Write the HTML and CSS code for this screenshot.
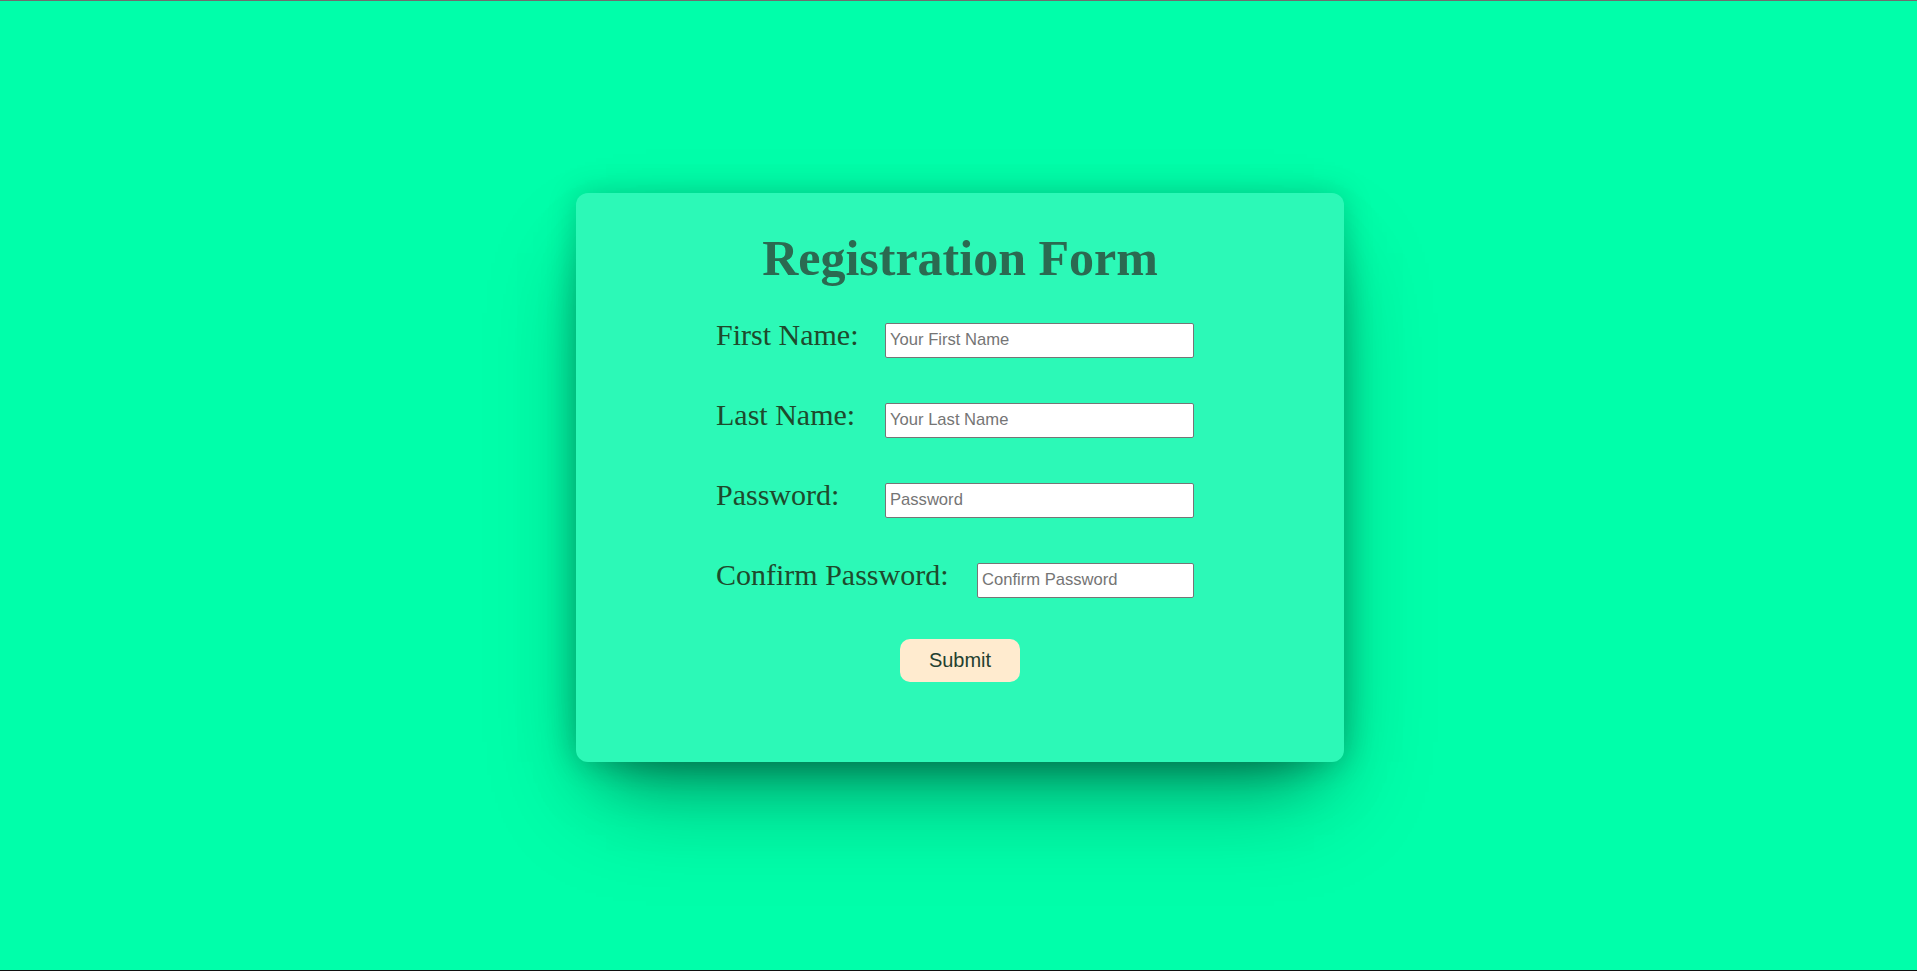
FILE: index.html
```html
<!DOCTYPE html>
<html lang="en">
<head>
<meta charset="utf-8">
<title>Registration Form</title>
<link rel="stylesheet" href="styles.css">
</head>
<body>
<main class="page">
  <form class="card">
    <h1 class="title">Registration Form</h1>
    <div class="fields">
      <div class="row">
        <label class="label" for="first">First Name:</label>
        <input class="input" id="first" type="text" placeholder="Your First Name">
      </div>
      <div class="row">
        <label class="label" for="last">Last Name:</label>
        <input class="input" id="last" type="text" placeholder="Your Last Name">
      </div>
      <div class="row">
        <label class="label" for="pass">Password:</label>
        <input class="input" id="pass" type="password" placeholder="Password">
      </div>
      <div class="row">
        <label class="label" for="confirm">Confirm Password:</label>
        <input class="input input-short" id="confirm" type="password" placeholder="Confirm Password">
      </div>
    </div>
    <div class="actions">
      <button class="submit" type="button">Submit</button>
    </div>
  </form>
</main>
</body>
</html>
```

FILE: styles.css
```css
* {
  box-sizing: border-box;
}

html, body {
  margin: 0;
  padding: 0;
}

body {
  height: 100vh;
  background: #00ffaa;
  border-top: 1px solid #6e6e6e;
  border-bottom: 1px solid #111111;
  overflow: hidden;
}

.page {
  display: flex;
  justify-content: center;
  padding-left: 3px;
}

.card {
  width: 768px;
  margin-top: 192px;
  padding: 38px 0 80px;
  background: #2cf9b7;
  border-radius: 12px;
  box-shadow:
    0 0 30px rgba(0, 0, 0, 0.18),
    0 50px 100px -20px rgba(0, 0, 0, 0.28),
    0 30px 60px -30px rgba(0, 0, 0, 0.5);
}

.title {
  margin: 0 0 32px;
  text-align: center;
  font-family: "Liberation Serif", "Times New Roman", serif;
  font-weight: bold;
  font-size: 50px;
  line-height: 55px;
  color: #2b6a51;
}

.fields {
  width: 478px;
  margin-left: 140px;
  display: flex;
  flex-direction: column;
  gap: 40.5px;
}

.row {
  display: flex;
  align-items: baseline;
  justify-content: space-between;
}

.label {
  white-space: nowrap;
  font-family: "Liberation Serif", "Times New Roman", serif;
  font-size: 30px;
  line-height: 33px;
  color: #1e4a2c;
}

.input {
  width: 309px;
  height: 35px;
  padding: 0 4px;
  border: 1px solid #767676;
  border-radius: 2px;
  background: #ffffff;
  font-family: "Liberation Sans", Arial, sans-serif;
  font-size: 16.6px;
  color: #222222;
}

.input::placeholder {
  color: #757575;
}

.input-short {
  width: 217px;
}

.actions {
  display: flex;
  justify-content: center;
  margin-top: 41px;
}

.submit {
  width: 120px;
  height: 43px;
  border: none;
  border-radius: 10px;
  background: #ffebcf;
  font-family: "Liberation Sans", Arial, sans-serif;
  font-size: 20px;
  color: #243f30;
  cursor: pointer;
}
```
